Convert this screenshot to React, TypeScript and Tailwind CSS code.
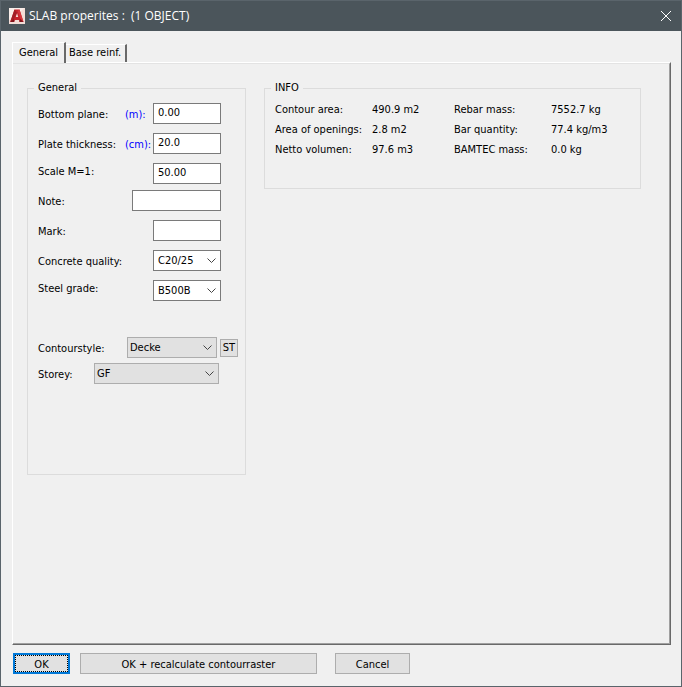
import type { ReactNode } from "react";

const info = [
  ["Contour area:", "490.9 m2", "Rebar mass:", "7552.7 kg"],
  ["Area of openings:", "2.8 m2", "Bar quantity:", "77.4 kg/m3"],
  ["Netto volumen:", "97.6 m3", "BAMTEC mass:", "0.0 kg"],
];

const Logo = () => (
  <svg viewBox="0 0 16 16" className="size-4" aria-hidden="true">
    <rect width="16" height="16" fill="#f3dcd6" />
    <path d="M0 0h16L0 12z" fill="#faeeea" />
    <path d="M5.5 1.500h5L14.500 14h-4L10 12H6l-.8 2h-4zM8 5L6.800 9h2.400z" fill="#c4222b" fillRule="evenodd" />
    <path d="M5.500 1.500 1.200 14l3.500-3L8 5z" fill="#a31e26" />
    <path d="M10.500 1.500 14.500 14l-3-3.500L8.500 3z" fill="#d4363d" />
    <path d="M1.200 14 5 11l.2 3zM14.500 14l-3.500-3-.5 3z" fill="#7d141b" />
  </svg>
);

type SelectProps = { id: string; value: string; className: string };

const Select = ({ id, value, className }: SelectProps) => (
  <div className={`relative h-[21px] ${className}`}>
    <select id={id} defaultValue={value} className="block h-full w-full appearance-none bg-transparent pr-5 outline-none">
      <option>{value}</option>
    </select>
    <svg viewBox="0 0 9 5" className="pointer-events-none absolute top-[7px] right-1 h-[5px] w-[9px]" fill="none" stroke="#444" aria-hidden="true">
      <path d="M.5.5l4 4 4-4" />
    </svg>
  </div>
);

type RowProps = { id: string; label: string; unit?: string; top?: boolean; children: ReactNode };

const Row = ({ id, label, unit, top, children }: RowProps) => (
  <div className={`flex justify-between ${top ? "items-start" : "items-center"}`}>
    <label htmlFor={id} className={`flex ${top ? "pt-px" : "pt-0.5"}`}>
      <span className={unit ? "w-[87px]" : ""}>{label}</span>
      {unit && <span className="text-[#0000ff]">{unit}</span>}
    </label>
    {children}
  </div>
);

const inputClass = "h-[21px] border border-[#7a7a7a] bg-white px-1 pb-0.5 outline-none";
const comboClass = "w-[68px] border border-[#7a7a7a] bg-white pl-1";
const listClass = "border border-[#adadad] bg-[#e1e1e1] pl-0.5";
const buttonClass = "h-[21px] border border-[#adadad] bg-[#e1e1e1] pt-0.5";

const App = () => {
  return (
    <div className="flex min-h-screen flex-col border border-[#5a646b] bg-[#f0f0f0] font-['DejaVu_Sans_Condensed','DejaVu_Sans',sans-serif] text-[11px] leading-4 text-black">
      {/* Title bar */}
      <header className="flex h-[30px] items-center bg-[#4b555b] px-2 text-white">
        <Logo />
        <h1 className="ml-1 font-['Open_Sans','Noto_Sans',sans-serif] text-xs whitespace-pre">SLAB properites :  (1 OBJECT)</h1>
        <button type="button" aria-label="Close" className="ml-auto p-0.5">
          <svg viewBox="0 0 10 10" className="size-2.5" stroke="#fff" aria-hidden="true">
            <path d="M0 0l10 10M10 0L0 10" />
          </svg>
        </button>
      </header>

      <main className="flex flex-1 flex-col pt-[11px] pr-2.5 pb-3 pl-[11px]">
        {/* Tabs */}
        <div role="tablist" className="flex items-end">
          <button type="button" role="tab" aria-selected="true" className="relative z-10 -mb-px h-[21px] border-t border-r-2 border-l border-t-white border-r-[#696969] border-l-white bg-[#f0f0f0] px-1.5">
            General
          </button>
          <button type="button" role="tab" aria-selected="false" className="h-[18px] border-t border-r-2 border-t-white border-r-[#696969] pr-1 pb-1 pl-[3px]">
            Base reinf.
          </button>
        </div>

        {/* Tab page */}
        <div role="tabpanel" className="flex flex-1 flex-col border border-t-white border-r-[#696969] border-b-[#696969] border-l-white">
          <div className="grid flex-1 grid-cols-[219px_1fr] items-start gap-[18px] border-t border-r border-b border-t-[#e3e3e3] border-r-[#a0a0a0] border-b-[#a0a0a0] pt-4 pr-7 pl-3.5">
            <fieldset className="min-h-[395px] border border-[#dcdcdc] pl-2.5">
              <legend className="-ml-1 px-1">General</legend>
              <div className="flex w-[183px] flex-col gap-[9px] pt-[7px]">
                <Row id="plane" label="Bottom plane:" unit="(m):">
                  <input id="plane" defaultValue="0.00" className={`w-[68px] ${inputClass}`} />
                </Row>
                <Row id="thickness" label="Plate thickness:" unit="(cm):">
                  <input id="thickness" defaultValue="20.0" className={`w-[68px] ${inputClass}`} />
                </Row>
                <Row id="scale" label="Scale M=1:" top>
                  <input id="scale" defaultValue="50.00" className={`w-[68px] ${inputClass}`} />
                </Row>
              </div>
              <div className="flex w-[183px] flex-col gap-[9px] pt-1.5">
                <Row id="note" label="Note:">
                  <input id="note" className={`w-[89px] ${inputClass}`} />
                </Row>
                <Row id="mark" label="Mark:">
                  <input id="mark" className={`w-[68px] ${inputClass}`} />
                </Row>
                <Row id="concrete" label="Concrete quality:">
                  <Select id="concrete" value="C20/25" className={comboClass} />
                </Row>
                <Row id="steel" label="Steel grade:" top>
                  <Select id="steel" value="B500B" className={comboClass} />
                </Row>
              </div>
              <div className="flex flex-col gap-[5px] pt-9">
                <div className="flex items-center">
                  <label htmlFor="style" className="w-[89px] pt-0.5">Contourstyle:</label>
                  <Select id="style" value="Decke" className={`w-[90px] ${listClass}`} />
                  <button type="button" className="ml-[3px] h-[18px] w-[18px] border border-[#adadad] bg-[#e1e1e1]">ST</button>
                </div>
                <div className="flex items-center">
                  <label htmlFor="storey" className="w-14 pt-0.5">Storey:</label>
                  <Select id="storey" value="GF" className={`w-[125px] ${listClass}`} />
                </div>
              </div>
            </fieldset>

            <fieldset className="min-h-[109px] border border-[#dcdcdc] pl-2.5">
              <legend className="-ml-1 px-1">INFO</legend>
              <dl className="grid grid-cols-[97px_82px_97px_auto] pt-1 leading-5 whitespace-nowrap">
                {info.map(([a, b, c, d]) => (
                  <div key={a} className="contents">
                    <dt>{a}</dt>
                    <dd>{b}</dd>
                    <dt>{c}</dt>
                    <dd>{d}</dd>
                  </div>
                ))}
              </dl>
            </fieldset>
          </div>
        </div>

        {/* Footer buttons */}
        <footer className="flex pt-2 pl-px">
          <button type="button" className="h-[21px] w-[57px] border-2 border-[#0078d7] bg-[#e1e1e1]">
            <span className="flex h-full items-center justify-center border border-dotted border-black pt-0.5">OK</span>
          </button>
          <button type="button" className={`ml-2.5 w-[237px] ${buttonClass}`}>OK + recalculate contourraster</button>
          <button type="button" className={`ml-[18px] w-[75px] ${buttonClass}`}>Cancel</button>
        </footer>
      </main>
    </div>
  );
};

export default App;
